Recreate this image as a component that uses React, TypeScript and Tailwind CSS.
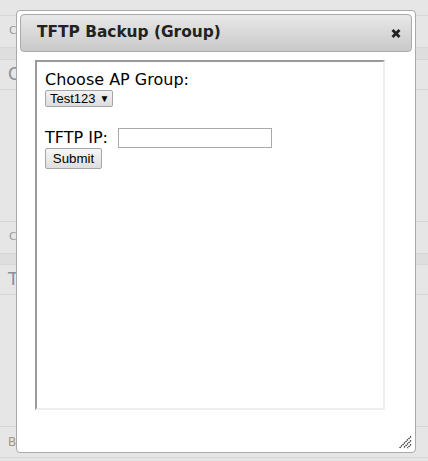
import React from 'react';

const PanelHead = ({ letter }: { letter: string }) => (
  <div className="h-[32px] border-b border-[#d6d6d6] flex items-center pl-[9px] text-[11px] text-[#9a9a9a]">
    {letter}
  </div>
);

const PanelTitle = ({ letter }: { letter: string }) => (
  <div className="h-[30px] border-b border-[#d6d6d6] flex items-center pl-[8px] text-[17px] text-[#8a8f99]">
    {letter}
  </div>
);

export default function App() {
  return (
    <div
      className="relative w-[428px] h-[461px] overflow-hidden bg-[#e6e6e6]"
      style={{ fontFamily: '"DejaVu Sans", Verdana, sans-serif' }}
    >
      {/* page behind the dialog */}
      <div className="h-[16px] border-b border-[#d6d6d6]" />
      <PanelHead letter="C" />
      <div className="h-[12px] bg-[#dedede] border-b border-[#d6d6d6]" />
      <PanelTitle letter="C" />
      <div className="h-[132px] border-b border-[#d6d6d6]" />
      <PanelHead letter="C" />
      <div className="h-[11px] bg-[#dedede] border-b border-[#d6d6d6]" />
      <PanelTitle letter="T" />
      <div className="h-[132px] border-b border-[#d6d6d6]" />
      <div className="h-[31px] border-b border-[#d6d6d6] flex items-center pl-[8px] text-[12px] text-[#a09585]">
        B
      </div>

      {/* dialog */}
      <div className="absolute left-[16px] top-[10px] w-[400px] h-[443px] bg-white border border-[#aaaaaa] rounded-[4px] p-[3px] flex flex-col">
        <div className="h-[38px] shrink-0 flex items-center justify-between pl-[16px] pr-[10px] border border-[#aaaaaa] rounded-[4px] bg-gradient-to-b from-[#e8e8e8] to-[#c9c9c9]">
          <span className="text-[15.4px] font-bold text-[#222222]">TFTP Backup (Group)</span>
          <svg width="10" height="9" viewBox="0 0 10 9">
            <path d="M1.5 1 L8.5 8 M8.5 1 L1.5 8" stroke="#222" strokeWidth="2.8" strokeLinecap="butt" />
          </svg>
        </div>

        <div className="ml-[15px] mt-[8px] w-[350px] h-[350px] border-2 border-t-[#9a9a9a] border-l-[#9a9a9a] border-r-[#eeeeee] border-b-[#eeeeee] bg-white">
          <div className="pl-[8px] pt-[8px] text-[16px] text-black">
            <div className="leading-[19px] h-[20px]">Choose AP Group:</div>
            <div
              className="w-[68px] h-[17px] flex items-center pl-[4px] gap-[4px] text-[13px] border border-[#a6a6a6] rounded-[2px] bg-gradient-to-b from-[#f2f2f2] to-[#dddddd]"
              style={{ fontFamily: '"Liberation Sans", Arial, sans-serif' }}
            >
              <span>Test123</span>
              <span className="text-[10px]">▼</span>
            </div>
            <div className="h-[20px]" />
            <div className="flex items-center h-[21px]">
              <span className="leading-[19px]">TFTP IP:</span>
              <div className="ml-[10px] w-[154px] h-[20px] border border-[#a9a9a9] bg-white" />
            </div>
            <div
              className="w-[57px] h-[21px] flex items-center justify-center text-[13.3px] border border-[#a6a6a6] rounded-[2px] bg-gradient-to-b from-[#f6f6f6] to-[#dedede]"
              style={{ fontFamily: '"Liberation Sans", Arial, sans-serif' }}
            >
              Submit
            </div>
          </div>
        </div>

        <svg className="absolute right-[3px] bottom-[3px]" width="13" height="13" viewBox="0 0 13 13">
          <path d="M12 0.5 L0.5 12 M12 4.5 L4.5 12 M12 8.5 L8.5 12" stroke="#111" strokeWidth="1.2" strokeDasharray="1.3 0.8" />
        </svg>
      </div>
    </div>
  );
}
